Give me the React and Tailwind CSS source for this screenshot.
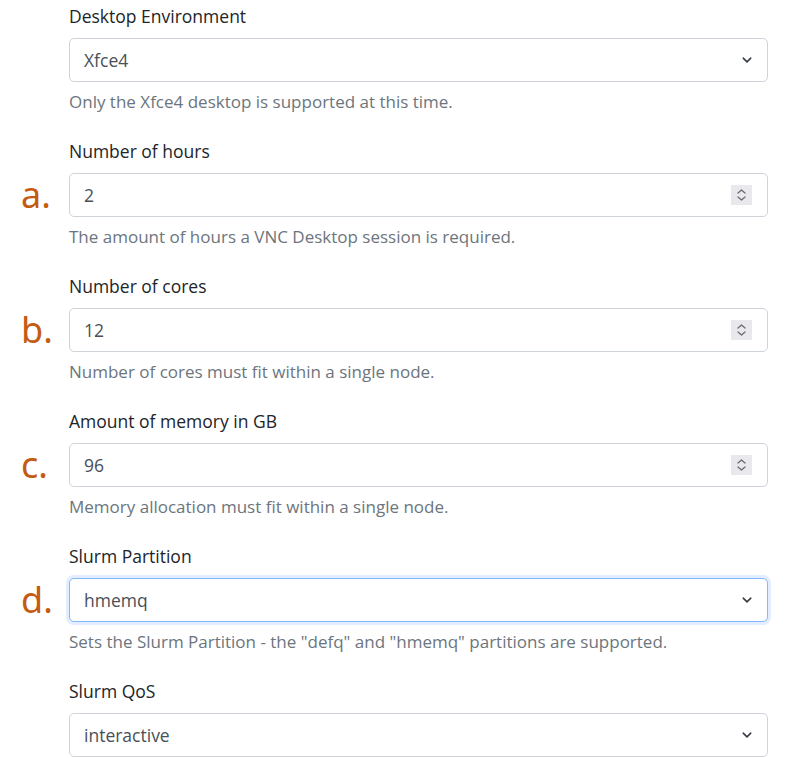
import React from "react";

const font = { fontFamily: '"Open Sans", "Noto Sans", sans-serif' };

const Chevron = () => (
  <svg width="10" height="10" viewBox="0 0 16 16" className="absolute right-[15px] top-1/2 -translate-y-1/2">
    <path d="M2 5l6 6 6-6" fill="none" stroke="#343a40" strokeWidth="2.4" strokeLinecap="round" strokeLinejoin="round" />
  </svg>
);

const Spinner = () => (
  <div className="absolute right-[15px] top-1/2 -translate-y-1/2 w-[21px] h-[20px] bg-[#e9e9ed] flex items-center justify-center">
    <svg width="11" height="14" viewBox="0 0 11 14">
      <path d="M2 5l3.5-3 3.5 3M2 9l3.5 3 3.5-3" fill="none" stroke="#6b6b73" strokeWidth="1.3" strokeLinecap="round" strokeLinejoin="round" />
    </svg>
  </div>
);

const Field = ({ label, value, help, kind, letter, focused }) => (
  <div className="pb-[22px]">
    <div className="pl-[69px] pr-[18px] pt-[3px] mb-[9px] text-[17.5px] leading-[26px] text-[#212529]">{label}</div>
    <div className="flex items-center">
      <div className="w-[69px] pl-[21px] text-[36px] leading-[44px] text-[#c55a11]" style={{ fontFamily: '"Noto Sans", sans-serif' }}>
        {letter}
      </div>
      <div
        className={
          "relative flex-1 mr-[18px] h-[44px] rounded-[5px] bg-white flex items-center pl-[14px] text-[17.5px] text-[#495057] border " +
          (focused ? "border-[#86b7fe] shadow-[0_0_0_3px_rgba(13,110,253,0.12)]" : "border-[#ced4da]")
        }
      >
        {value}
        {kind === "select" ? <Chevron /> : <Spinner />}
      </div>
    </div>
    {help && (
      <div className="pl-[69px] pr-[18px] mt-[9px] text-[17px] leading-[22px] text-[#6c757d]">{help}</div>
    )}
  </div>
);

export default function App() {
  return (
    <div className="bg-white w-[786px] h-[758px] overflow-hidden" style={font}>
      <Field label="Desktop Environment" value="Xfce4" kind="select" help="Only the Xfce4 desktop is supported at this time." />
      <Field label="Number of hours" value="2" kind="number" letter="a." help="The amount of hours a VNC Desktop session is required." />
      <Field label="Number of cores" value="12" kind="number" letter="b." help="Number of cores must fit within a single node." />
      <Field label="Amount of memory in GB" value="96" kind="number" letter="c." help="Memory allocation must fit within a single node." />
      <Field
        label="Slurm Partition"
        value="hmemq"
        kind="select"
        letter="d."
        focused
        help={'Sets the Slurm Partition - the "defq" and "hmemq" partitions are supported.'}
      />
      <Field label="Slurm QoS" value="interactive" kind="select" />
    </div>
  );
}
